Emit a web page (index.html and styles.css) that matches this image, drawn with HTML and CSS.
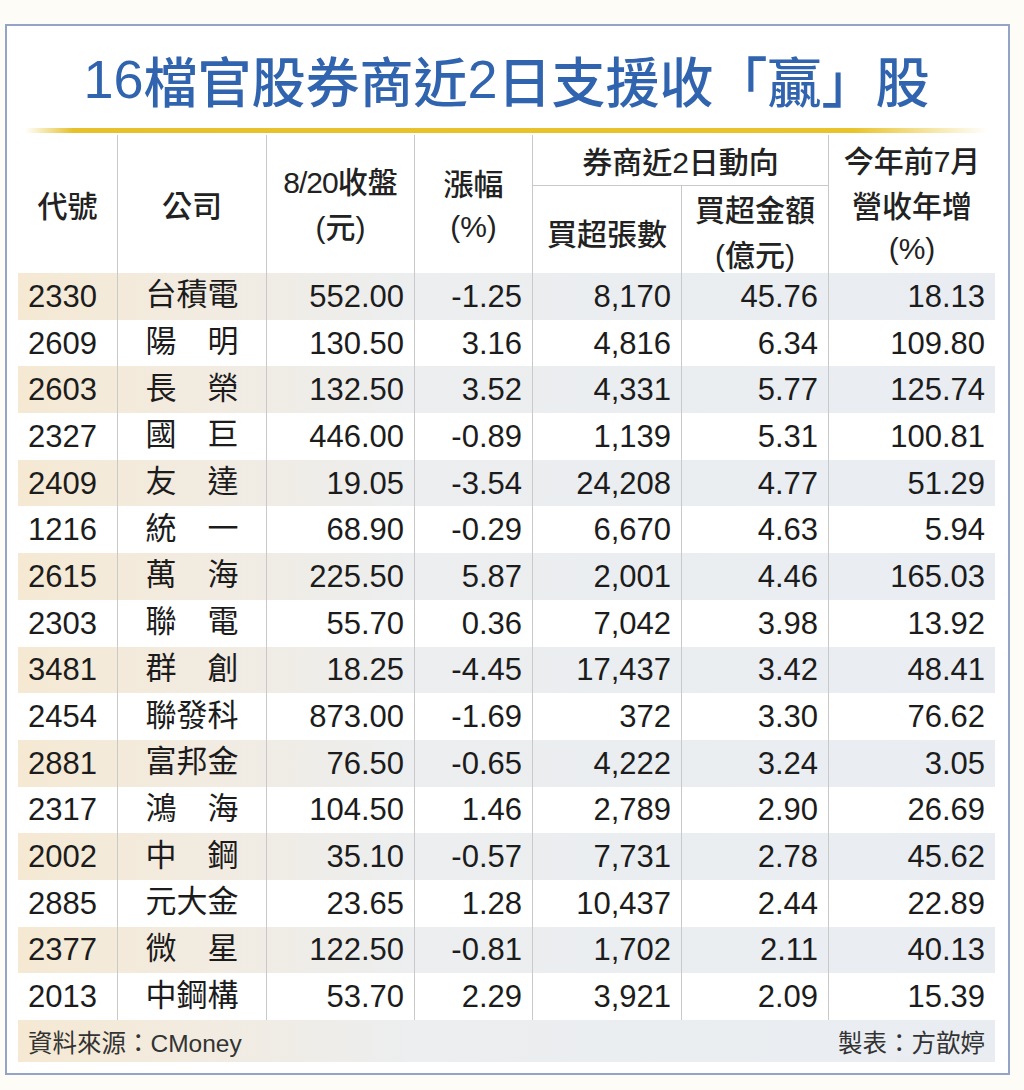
FILE: index.html
```html
<!DOCTYPE html>
<html lang="zh-Hant">
<head>
<meta charset="utf-8">
<title>16檔官股券商近2日支援收「贏」股</title>
<link rel="stylesheet" href="styles.css">
</head>
<body>
<div class="frame">
  <h1 class="title"><span class="lat">16</span>檔官股券商近<span class="lat">2</span>日支援收「贏」股</h1>
  <div class="rule"></div>
  <div class="table">
    <div class="head">
      <div class="hc c1 span2"><span class="cj">代號</span></div>
      <div class="hc c2 span2"><span class="cj">公司</span></div>
      <div class="hc c3 span2"><span><span class="tight">8/20</span><span class="cj">收盤</span><br>(<span class="cj">元</span>)</span></div>
      <div class="hc c4 span2"><span><span class="cj">漲幅</span><br>(%)</span></div>
      <div class="hc group"><span><span class="cj">券商近</span>2<span class="cj">日動向</span></span></div>
      <div class="hc c7 span2"><span><span class="cj">今年前</span>7<span class="cj">月</span><br><span class="cj">營收年增</span><br>(%)</span></div>
      <div class="hc c5 sub"><span class="cj">買超張數</span></div>
      <div class="hc c6 sub"><span><span class="cj">買超金額</span><br>(<span class="cj">億元</span>)</span></div>
    </div>
    <div class="row shade"><div class="code">2330</div><div class="name">台積電</div><div class="num">552.00</div><div class="num">-1.25</div><div class="num">8,170</div><div class="num">45.76</div><div class="num">18.13</div></div>
    <div class="row"><div class="code">2609</div><div class="name">陽　明</div><div class="num">130.50</div><div class="num">3.16</div><div class="num">4,816</div><div class="num">6.34</div><div class="num">109.80</div></div>
    <div class="row shade"><div class="code">2603</div><div class="name">長　榮</div><div class="num">132.50</div><div class="num">3.52</div><div class="num">4,331</div><div class="num">5.77</div><div class="num">125.74</div></div>
    <div class="row"><div class="code">2327</div><div class="name">國　巨</div><div class="num">446.00</div><div class="num">-0.89</div><div class="num">1,139</div><div class="num">5.31</div><div class="num">100.81</div></div>
    <div class="row shade"><div class="code">2409</div><div class="name">友　達</div><div class="num">19.05</div><div class="num">-3.54</div><div class="num">24,208</div><div class="num">4.77</div><div class="num">51.29</div></div>
    <div class="row"><div class="code">1216</div><div class="name">統　一</div><div class="num">68.90</div><div class="num">-0.29</div><div class="num">6,670</div><div class="num">4.63</div><div class="num">5.94</div></div>
    <div class="row shade"><div class="code">2615</div><div class="name">萬　海</div><div class="num">225.50</div><div class="num">5.87</div><div class="num">2,001</div><div class="num">4.46</div><div class="num">165.03</div></div>
    <div class="row"><div class="code">2303</div><div class="name">聯　電</div><div class="num">55.70</div><div class="num">0.36</div><div class="num">7,042</div><div class="num">3.98</div><div class="num">13.92</div></div>
    <div class="row shade"><div class="code">3481</div><div class="name">群　創</div><div class="num">18.25</div><div class="num">-4.45</div><div class="num">17,437</div><div class="num">3.42</div><div class="num">48.41</div></div>
    <div class="row"><div class="code">2454</div><div class="name">聯發科</div><div class="num">873.00</div><div class="num">-1.69</div><div class="num">372</div><div class="num">3.30</div><div class="num">76.62</div></div>
    <div class="row shade"><div class="code">2881</div><div class="name">富邦金</div><div class="num">76.50</div><div class="num">-0.65</div><div class="num">4,222</div><div class="num">3.24</div><div class="num">3.05</div></div>
    <div class="row"><div class="code">2317</div><div class="name">鴻　海</div><div class="num">104.50</div><div class="num">1.46</div><div class="num">2,789</div><div class="num">2.90</div><div class="num">26.69</div></div>
    <div class="row shade"><div class="code">2002</div><div class="name">中　鋼</div><div class="num">35.10</div><div class="num">-0.57</div><div class="num">7,731</div><div class="num">2.78</div><div class="num">45.62</div></div>
    <div class="row"><div class="code">2885</div><div class="name">元大金</div><div class="num">23.65</div><div class="num">1.28</div><div class="num">10,437</div><div class="num">2.44</div><div class="num">22.89</div></div>
    <div class="row shade"><div class="code">2377</div><div class="name">微　星</div><div class="num">122.50</div><div class="num">-0.81</div><div class="num">1,702</div><div class="num">2.11</div><div class="num">40.13</div></div>
    <div class="row"><div class="code">2013</div><div class="name">中鋼構</div><div class="num">53.70</div><div class="num">2.29</div><div class="num">3,921</div><div class="num">2.09</div><div class="num">15.39</div></div>
    <div class="foot">
      <span>資料來源：CMoney</span>
      <span>製表：方歆婷</span>
    </div>
  </div>
</div>
</body>
</html>
```
FILE: styles.css
```css
html, body {
  margin: 0;
  padding: 0;
  background: #fdfcf6;
}

body {
  font-family: "Liberation Sans", "Noto Sans CJK TC", sans-serif;
  color: #1c1c1c;
}

.frame {
  box-sizing: border-box;
  width: 1005px;
  height: 1051px;
  margin: 24px 0 0 5px;
  border: 2px solid #94a3c6;
  background: #ffffff;
  padding: 0 13px 0 11px;
}

.title {
  margin: 0;
  height: 102px;
  box-sizing: border-box;
  padding-top: 4px;
  display: flex;
  align-items: center;
  justify-content: center;
  font-size: 54px;
  font-weight: 500;
  color: #3164ae;
  white-space: nowrap;
}

.title .lat {
  font-weight: 400;
}

.rule {
  height: 5px;
  margin: 0 7px 0 7px;
  background: linear-gradient(to right, rgba(232, 194, 42, 0) 0%, #e6c12c 5%, #e9c32a 86%, rgba(232, 194, 42, 0) 100%);
}

.table {
  margin-top: 2px;
  width: 977px;
}

.head,
.row {
  display: grid;
  grid-template-columns: 99px 149px 148px 118px 149px 147px 167px;
}

.head {
  grid-template-rows: 51px 87px;
}

.hc {
  display: flex;
  align-items: center;
  justify-content: center;
  text-align: center;
  font-size: 30px;
  font-weight: 400;
  line-height: 42px;
  color: #222;
  border-left: 1px solid #c9c9c9;
}

.hc .cj {
  font-family: "Noto Sans CJK TC", sans-serif;
  font-weight: 500;
}

.hc .tight {
  letter-spacing: -1px;
}

.hc.c1 {
  border-left: none;
}

.span2 {
  grid-row: 1 / span 2;
}

.c1 { grid-column: 1; }
.c2 { grid-column: 2; }
.c3 { grid-column: 3; }
.c4 { grid-column: 4; }
.c5 { grid-column: 5; grid-row: 2; }
.c6 { grid-column: 6; grid-row: 2; }
.c7 { grid-column: 7; }

.group {
  grid-column: 5 / span 2;
  grid-row: 1;
  border-bottom: 1px solid #c9c9c9;
  padding-top: 2px;
}

.sub {
  padding-top: 4px;
}

.row {
  height: 46.7px;
  font-size: 31px;
  line-height: 1;
}

.row.shade {
  background: linear-gradient(to right, #f5e9d3 0%, #f2ebe0 18%, #eceeef 40%, #e9edf2 100%);
}

.row > div {
  display: flex;
  align-items: center;
  border-left: 1px solid #c9c9c9;
  white-space: nowrap;
}

.row > .code {
  border-left: none;
  padding-left: 10px;
}

.row > .name {
  justify-content: center;
  padding-bottom: 3px;
  box-sizing: border-box;
}

.row > .num {
  justify-content: flex-end;
  padding-right: 10px;
}

.foot {
  height: 42px;
  display: flex;
  align-items: center;
  justify-content: space-between;
  padding: 0 10px;
  font-size: 24.5px;
  color: #333;
  background: linear-gradient(to right, #f5e9d3 0%, #f2ebe0 18%, #eceeef 40%, #e9edf2 100%);
}
```
